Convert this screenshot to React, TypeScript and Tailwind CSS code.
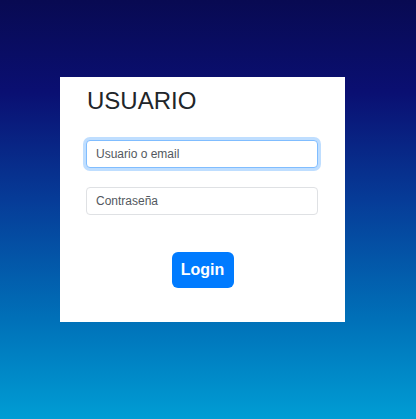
import { useState } from 'react'

export default function App() {
  const [form, setForm] = useState({ user: '', password: '' })

  const handleChange = (e: React.ChangeEvent<HTMLInputElement>) => {
    setForm({ ...form, [e.target.name]: e.target.value })
  }

  return (
    <div className="h-[419px] w-full overflow-hidden bg-[linear-gradient(to_bottom,#080a52_0%,#0a0f72_22%,#063c98_48%,#0070b8_76%,#009dd4_100%)] pl-[60px] pt-[77px] font-['Liberation_Sans',Arial,sans-serif]">
      <div className="w-[285px] h-[245px] bg-white px-[26px] pt-[9px]">
        <h1 className="text-[24px] leading-[29px] text-[#212529] font-normal pl-px">USUARIO</h1>
        <form className="mt-[25px] flex flex-col" onSubmit={(e) => e.preventDefault()}>
          <input
            name="user"
            autoFocus
            placeholder="Usuario o email"
            value={form.user}
            onChange={handleChange}
            className="h-[28px] w-[232px] rounded-[4px] border border-[#80bdff] bg-white px-[9px] text-[12px] text-[#495057] placeholder:text-[#53585e] outline-none shadow-[0_0_0_3px_rgba(0,123,255,0.25)] caret-black"
          />
          <input
            name="password"
            type="password"
            placeholder="Contraseña"
            value={form.password}
            onChange={handleChange}
            className="mt-[19px] h-[28px] w-[232px] rounded-[4px] border border-[#dfe1e4] bg-white px-[9px] text-[12px] text-[#495057] placeholder:text-[#53585e] outline-none"
          />
          <div className="mt-[37px] flex justify-center">
            <button
              type="submit"
              className="h-[36px] w-[62px] rounded-[6px] bg-[#007bff] text-[16px] font-bold text-white"
            >
              Login
            </button>
          </div>
        </form>
      </div>
    </div>
  )
}
